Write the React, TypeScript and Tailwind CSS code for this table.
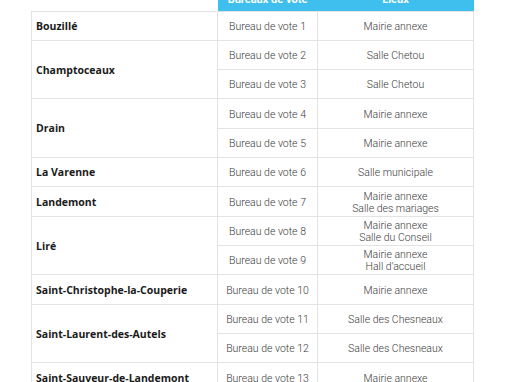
type Bureau = { num: number; lieu: string[] };
type Commune = { name: string; bureaux: Bureau[] };

const communes: Commune[] = [
  { name: "Bouzillé", bureaux: [{ num: 1, lieu: ["Mairie annexe"] }] },
  {
    name: "Champtoceaux",
    bureaux: [
      { num: 2, lieu: ["Salle Chetou"] },
      { num: 3, lieu: ["Salle Chetou"] },
    ],
  },
  {
    name: "Drain",
    bureaux: [
      { num: 4, lieu: ["Mairie annexe"] },
      { num: 5, lieu: ["Mairie annexe"] },
    ],
  },
  { name: "La Varenne", bureaux: [{ num: 6, lieu: ["Salle municipale"] }] },
  { name: "Landemont", bureaux: [{ num: 7, lieu: ["Mairie annexe", "Salle des mariages"] }] },
  {
    name: "Liré",
    bureaux: [
      { num: 8, lieu: ["Mairie annexe", "Salle du Conseil"] },
      { num: 9, lieu: ["Mairie annexe", "Hall d'accueil"] },
    ],
  },
  { name: "Saint-Christophe-la-Couperie", bureaux: [{ num: 10, lieu: ["Mairie annexe"] }] },
  {
    name: "Saint-Laurent-des-Autels",
    bureaux: [
      { num: 11, lieu: ["Salle des Chesneaux"] },
      { num: 12, lieu: ["Salle des Chesneaux"] },
    ],
  },
  { name: "Saint-Sauveur-de-Landemont", bureaux: [{ num: 13, lieu: ["Mairie annexe"] }] },
];

const cell =
  "border border-[#e3e3e3] pt-[2px] text-center font-light text-[#3a3a3a] text-[10.5px] leading-[12px]";

export default function App() {
  return (
    <div className="h-[382px] overflow-hidden bg-white font-['Roboto',sans-serif]">
      <table className="ml-[31px] -mt-[20px] w-[442px] border-collapse table-fixed">
        <colgroup>
          <col className="w-[186px]" />
          <col className="w-[100px]" />
          <col className="w-[156px]" />
        </colgroup>
        <thead>
          <tr className="h-[31px]">
            <th />
            <th className="bg-[#3ebfee] pb-[5px] align-bottom text-[11px] font-bold leading-[13px] text-white">
              Bureaux de vote
            </th>
            <th className="bg-[#3ebfee] pb-[5px] align-bottom text-[11px] font-bold leading-[13px] text-white">
              Lieux
            </th>
          </tr>
        </thead>
        <tbody>
          {communes.map((c) =>
            c.bureaux.map((b, i) => (
              <tr key={b.num} className="h-[29.33px]">
                {i === 0 && (
                  <td
                    rowSpan={c.bureaux.length}
                    className="border border-[#e3e3e3] pl-[4px] pt-[2px] text-left font-['Open_Sans',sans-serif] text-[10.5px] font-bold text-[#1a1a1a]"
                  >
                    {c.name}
                  </td>
                )}
                <td className={cell}>Bureau de vote {b.num}</td>
                <td className={cell}>
                  {b.lieu.map((l) => (
                    <div key={l}>{l}</div>
                  ))}
                </td>
              </tr>
            ))
          )}
        </tbody>
      </table>
    </div>
  );
}
